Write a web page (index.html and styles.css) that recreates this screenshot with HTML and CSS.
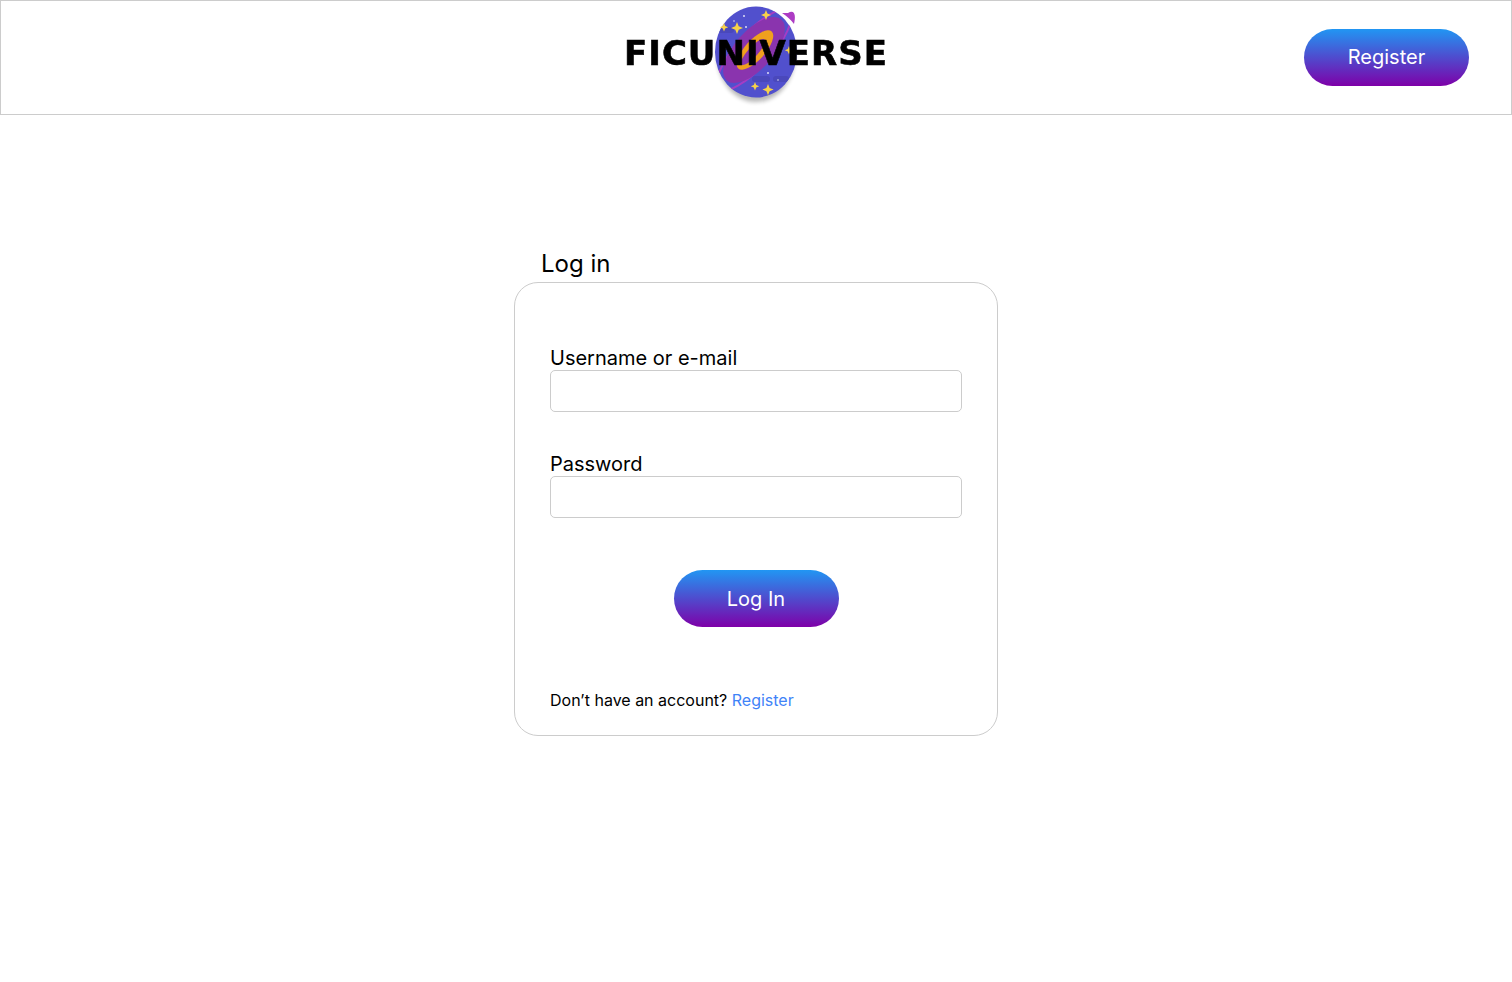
FILE: index.html
```html
<!DOCTYPE html>
<html lang="en">
<head>
    <meta charset="UTF-8">
    <meta name="viewport" content="width=device-width, initial-scale=1.0">
    <title>Ficuniverse - Log in</title>
    <link rel="stylesheet" href="styles.css">
</head>
<body>

<header class="topbar">
    <div class="topbar-side"></div>
    <a class="logo" href="#">
        <svg class="logo-planet" width="110" height="110" viewBox="0 0 110 110">
            <defs>
                <clipPath id="planetClip"><ellipse cx="56" cy="52" rx="41" ry="45.5"/></clipPath>
            </defs>
            <ellipse cx="56" cy="56" rx="39" ry="46" fill="#000" opacity="0.28" class="planet-shadow"/>
            <path d="M88 13 C95 9 96 16 94 24 C91 20 87 16 82 13 Z" fill="#ad3cc4"/>
            <ellipse cx="56" cy="52" rx="41" ry="45.5" fill="#5150cd"/>
            <g clip-path="url(#planetClip)">
                <rect x="18" y="27" width="16" height="6" rx="3" fill="#4a48bb"/>
                <rect x="52" y="76" width="18" height="6" rx="3" fill="#4a48bb"/>
                <rect x="73" y="76" width="16" height="6" rx="3" fill="#4a48bb"/>
                <ellipse cx="54" cy="50" rx="52" ry="17" transform="rotate(-48 54 50)" fill="none" stroke="#a53cc4" stroke-width="2"/>
                <ellipse cx="54" cy="50" rx="41" ry="19" transform="rotate(-48 54 50)" fill="#8a34ae"/>
                <ellipse cx="55" cy="50" rx="25" ry="10" transform="rotate(-48 55 50)" fill="#f0a01e"/>
                <ellipse cx="53" cy="52" rx="17" ry="5" transform="rotate(-48 53 52)" fill="#8a34ae"/>
            </g>
            <g fill="#f7d24a">
                <path d="M66 10 l1.4 3.6 3.6 1.4 -3.6 1.4 -1.4 3.6 -1.4 -3.6 -3.6 -1.4 3.6 -1.4z"/>
                <path d="M37 22 l1.7 4.3 4.3 1.7 -4.3 1.7 -1.7 4.3 -1.7 -4.3 -4.3 -1.7 4.3 -1.7z"/>
                <path d="M24 23 l1.2 3 3 1.2 -3 1.2 -1.2 3 -1.2 -3 -3 -1.2 3 -1.2z"/>
                <path d="M55 82 l1.2 3 3 1.2 -3 1.2 -1.2 3 -1.2 -3 -3 -1.2 3 -1.2z"/>
                <path d="M68 84 l1.6 4 4 1.6 -4 1.6 -1.6 4 -1.6 -4 -4 -1.6 4 -1.6z"/>
                <path d="M89 46 l1.2 3 3 1.2 -3 1.2 -1.2 3 -1.2 -3 -3 -1.2 3 -1.2z"/>
            </g>
            <g fill="#fff" opacity="0.8">
                <circle cx="44" cy="16" r="1"/>
                <circle cx="34" cy="21" r="0.8"/>
                <circle cx="46" cy="27" r="1"/>
                <circle cx="68" cy="73" r="1"/>
                <circle cx="78" cy="80" r="0.8"/>
            </g>
        </svg>
        <span class="logo-word">FICUNIVERSE</span>
    </a>
    <div class="topbar-side topbar-right">
        <a class="pill-btn" href="#">Register</a>
    </div>
</header>

<main class="content">
    <section class="login">
        <h1 class="login-title">Log in</h1>
        <form class="login-card">
            <label class="field-label" for="username">Username or e-mail</label>
            <input class="field-input" id="username" type="text">

            <label class="field-label" for="password">Password</label>
            <input class="field-input" id="password" type="password">

            <div class="login-actions">
                <button class="pill-btn" type="button">Log In</button>
            </div>

            <p class="login-note">Don’t have an account? <a href="#">Register</a></p>
        </form>
    </section>
</main>

</body>
</html>
```

FILE: styles.css
```css
* {
    box-sizing: border-box;
}
body {
    margin: 0;
    background-color: white;
    color: black;
    font-family: Inter, Arial, sans-serif;
}
.topbar {
    display: grid;
    grid-template-columns: 1fr auto 1fr;
    align-items: center;
    height: 115px;
    border: 1px solid #ccc;
}
.topbar-right {
    display: flex;
    justify-content: flex-end;
    padding: 0 42px 1px 0;
}
.logo {
    position: relative;
    display: flex;
    align-items: center;
    justify-content: center;
    width: 266px;
    height: 113px;
    color: black;
    text-decoration: none;
}
.logo-planet {
    position: absolute;
    left: 77px;
    top: -1px;
}
.planet-shadow {
    filter: blur(2px);
}
.logo-word {
    position: relative;
    top: -5px;
    font-family: "DejaVu Sans", sans-serif;
    font-size: 34px;
    font-weight: bold;
    letter-spacing: 1px;
    -webkit-text-stroke: 0.6px black;
    filter: blur(0.4px);
}
.pill-btn {
    display: inline-flex;
    align-items: center;
    justify-content: center;
    width: 165px;
    height: 57px;
    padding: 0;
    border: none;
    border-radius: 29px;
    background: linear-gradient(180deg, #2196f3, #7e00a8);
    color: white;
    font-family: inherit;
    font-size: 20px;
    text-decoration: none;
    cursor: pointer;
}
.login {
    width: 484px;
    margin: 130px auto 0;
}
.login-title {
    margin: 0 0 0 27px;
    font-size: 24px;
    font-weight: normal;
    line-height: 37px;
}
.login-card {
    display: flex;
    flex-direction: column;
    height: 454px;
    padding: 64px 35px 0;
    border: 1px solid #ccc;
    border-radius: 24px;
}
.field-label {
    font-size: 20px;
    line-height: 23px;
}
.field-input {
    width: 100%;
    height: 42px;
    margin-bottom: 41px;
    border: 1px solid #ccc;
    border-radius: 5px;
    background: white;
}
.login-actions {
    display: flex;
    justify-content: center;
    margin-top: 11px;
}
.login-note {
    margin: 63px 0 0;
    font-size: 16px;
    line-height: 20px;
}
.login-note a {
    color: #3f83f8;
    text-decoration: none;
}
```
